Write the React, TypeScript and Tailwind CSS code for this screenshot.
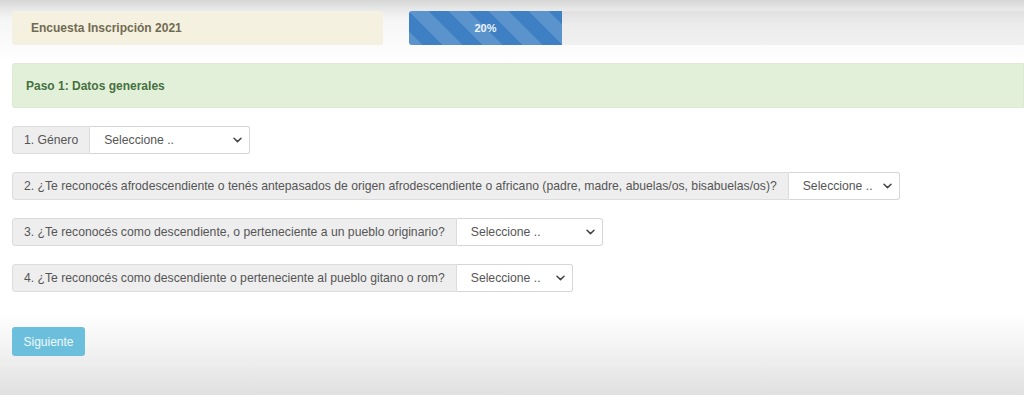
import React from "react";

const Chevron = () => (
  <svg width="9" height="6" viewBox="0 0 9 6" className="shrink-0">
    <path d="M1 1.2 L4.5 4.6 L8 1.2" fill="none" stroke="#444" strokeWidth="1.5" strokeLinecap="round" strokeLinejoin="round" />
  </svg>
);

function Row({ label, selW, className }: { label: string; selW: string; className: string }) {
  return (
    <div className={`flex h-[28px] text-[12.2px] text-[#555] ${className}`}>
      <div className="flex items-center rounded-l-[3px] border border-[#dcdcdc] bg-[#eeeeee] pl-[11px] pr-[11px] whitespace-nowrap">
        {label}
      </div>
      <div className={`flex items-center justify-between rounded-r-[3px] border border-l-0 border-[#d6d6d6] bg-white pl-[14px] pr-[7px] ${selW}`}>
        <span>Seleccione ..</span>
        <Chevron />
      </div>
    </div>
  );
}

export default function App() {
  return (
    <div
      className="relative h-[395px] w-[1024px] overflow-hidden bg-[linear-gradient(to_bottom,#d6d6d6_0px,#e9e9e9_10px,#f6f6f6_20px,#fcfcfc_50px,#ffffff_62px,#ffffff_312px,#f4f4f4_345px,#e0e0e0_395px)] pl-[12px]"
      style={{ fontFamily: '"Liberation Sans", Arial, sans-serif' }}
    >
      <div className="mt-[11px] flex h-[34px]">
        <div className="flex w-[371px] items-center rounded-[3px] bg-[#f5f1e0] pl-[19px] text-[12px] font-bold text-[#716b52]">
          Encuesta Inscripción 2021
        </div>
        <div className="ml-[26px] flex flex-1 overflow-hidden rounded-l-[3px] bg-[linear-gradient(to_bottom,#e0e0e0,#ececec_40%,#f0f0f0)]">
          <div className="flex h-full w-[153px] items-center justify-center bg-[#3e80c3] bg-[linear-gradient(45deg,rgba(255,255,255,0.15)_25%,transparent_25%,transparent_50%,rgba(255,255,255,0.15)_50%,rgba(255,255,255,0.15)_75%,transparent_75%,transparent)] bg-[length:40px_40px] text-[11px] font-bold text-[#eef4fb]">
            20%
          </div>
        </div>
      </div>

      <div className="mt-[18px] flex h-[45px] items-center rounded-l-[3px] border border-[#dbead0] bg-[#e3f0d9] pl-[13px] text-[12px] font-bold text-[#45703f]">
        Paso 1: Datos generales
      </div>

      <Row className="mt-[18px]" label="1. Género" selW="w-[160px]" />
      <Row
        className="mt-[18px]"
        label="2. ¿Te reconocés afrodescendiente o tenés antepasados de origen afrodescendiente o africano (padre, madre, abuelas/os, bisabuelas/os)?"
        selW="w-[111px]"
      />
      <Row
        className="mt-[18px]"
        label="3. ¿Te reconocés como descendiente, o perteneciente a un pueblo originario?"
        selW="w-[146px]"
      />
      <Row
        className="mt-[18px]"
        label="4. ¿Te reconocés como descendiente o perteneciente al pueblo gitano o rom?"
        selW="w-[116px]"
      />

      <button className="mt-[35px] flex h-[29px] w-[73px] items-center justify-center rounded-[3px] bg-[#6bbfdc] text-[12px] text-white/90">
        Siguiente
      </button>
    </div>
  );
}
